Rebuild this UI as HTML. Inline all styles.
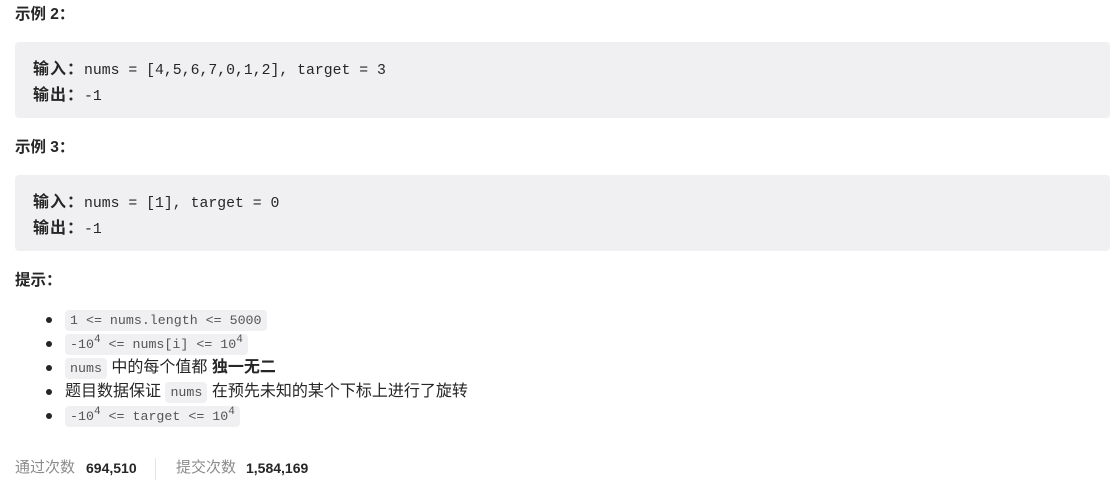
<!DOCTYPE html>
<html><head><meta charset="utf-8"><style>
body{margin:0;background:#fff;width:1120px;height:487px;overflow:hidden;font-family:"Liberation Sans","Noto Sans CJK SC",sans-serif;font-size:15px;color:#262626;position:relative}
.a{position:absolute;white-space:nowrap}
h4{position:absolute;margin:0;left:15px;font-size:15.5px;font-weight:bold;line-height:20px}
.pre{position:absolute;left:15px;width:1095px;height:76px;background:#f0f0f2;border-radius:4px;font-family:"Liberation Mono","Noto Sans CJK SC",monospace;font-size:14.8px;color:#262626}
.pre div{position:absolute;left:18px;line-height:20px;white-space:nowrap}
.pre b{font-family:"Noto Sans CJK SC",sans-serif;font-weight:bold;font-size:16px;letter-spacing:1px}
ul{position:absolute;margin:0;padding:0;list-style:none;left:43px;top:309px}
li{height:24px;line-height:22px;position:relative;padding-left:22px;white-space:nowrap;font-size:16px}
li:before{content:"";position:absolute;left:3px;top:8px;width:6px;height:6px;border-radius:50%;background:#262626}
code{font-family:"Liberation Mono",monospace;font-size:13.3px;background:#f0f0f2;border-radius:4px;padding:3px 5px;color:#555}
sup{font-size:11px;line-height:0;vertical-align:6px}
.f{font-size:15px;top:458px;line-height:20px}
</style></head><body>
<h4 style="top:5px">示例 2：</h4>
<div class="pre" style="top:42px"><div style="top:15px"><b>输入：</b>nums = [4,5,6,7,0,1,2], target = 3</div><div style="top:41px"><b>输出：</b>-1</div></div>
<h4 style="top:138px">示例 3：</h4>
<div class="pre" style="top:175px"><div style="top:15px"><b>输入：</b>nums = [1], target = 0</div><div style="top:41px"><b>输出：</b>-1</div></div>
<h4 style="top:271px">提示：</h4>
<ul>
<li><code>1 &lt;= nums.length &lt;= 5000</code></li>
<li><code>-10<sup>4</sup> &lt;= nums[i] &lt;= 10<sup>4</sup></code></li>
<li><code>nums</code> 中的每个值都 <b>独一无二</b></li>
<li>题目数据保证 <code>nums</code> 在预先未知的某个下标上进行了旋转</li>
<li><code>-10<sup>4</sup> &lt;= target &lt;= 10<sup>4</sup></code></li>
</ul>
<div class="a f" style="left:15px;color:#8c8c8c">通过次数</div>
<div class="a f" style="left:86px;font-weight:bold;font-size:14px">694,510</div>
<div class="a" style="left:155px;top:458px;width:1px;height:22px;background:#e5e5e5"></div>
<div class="a f" style="left:176px;color:#8c8c8c">提交次数</div>
<div class="a f" style="left:246px;font-weight:bold;font-size:14px">1,584,169</div>
</body></html>
